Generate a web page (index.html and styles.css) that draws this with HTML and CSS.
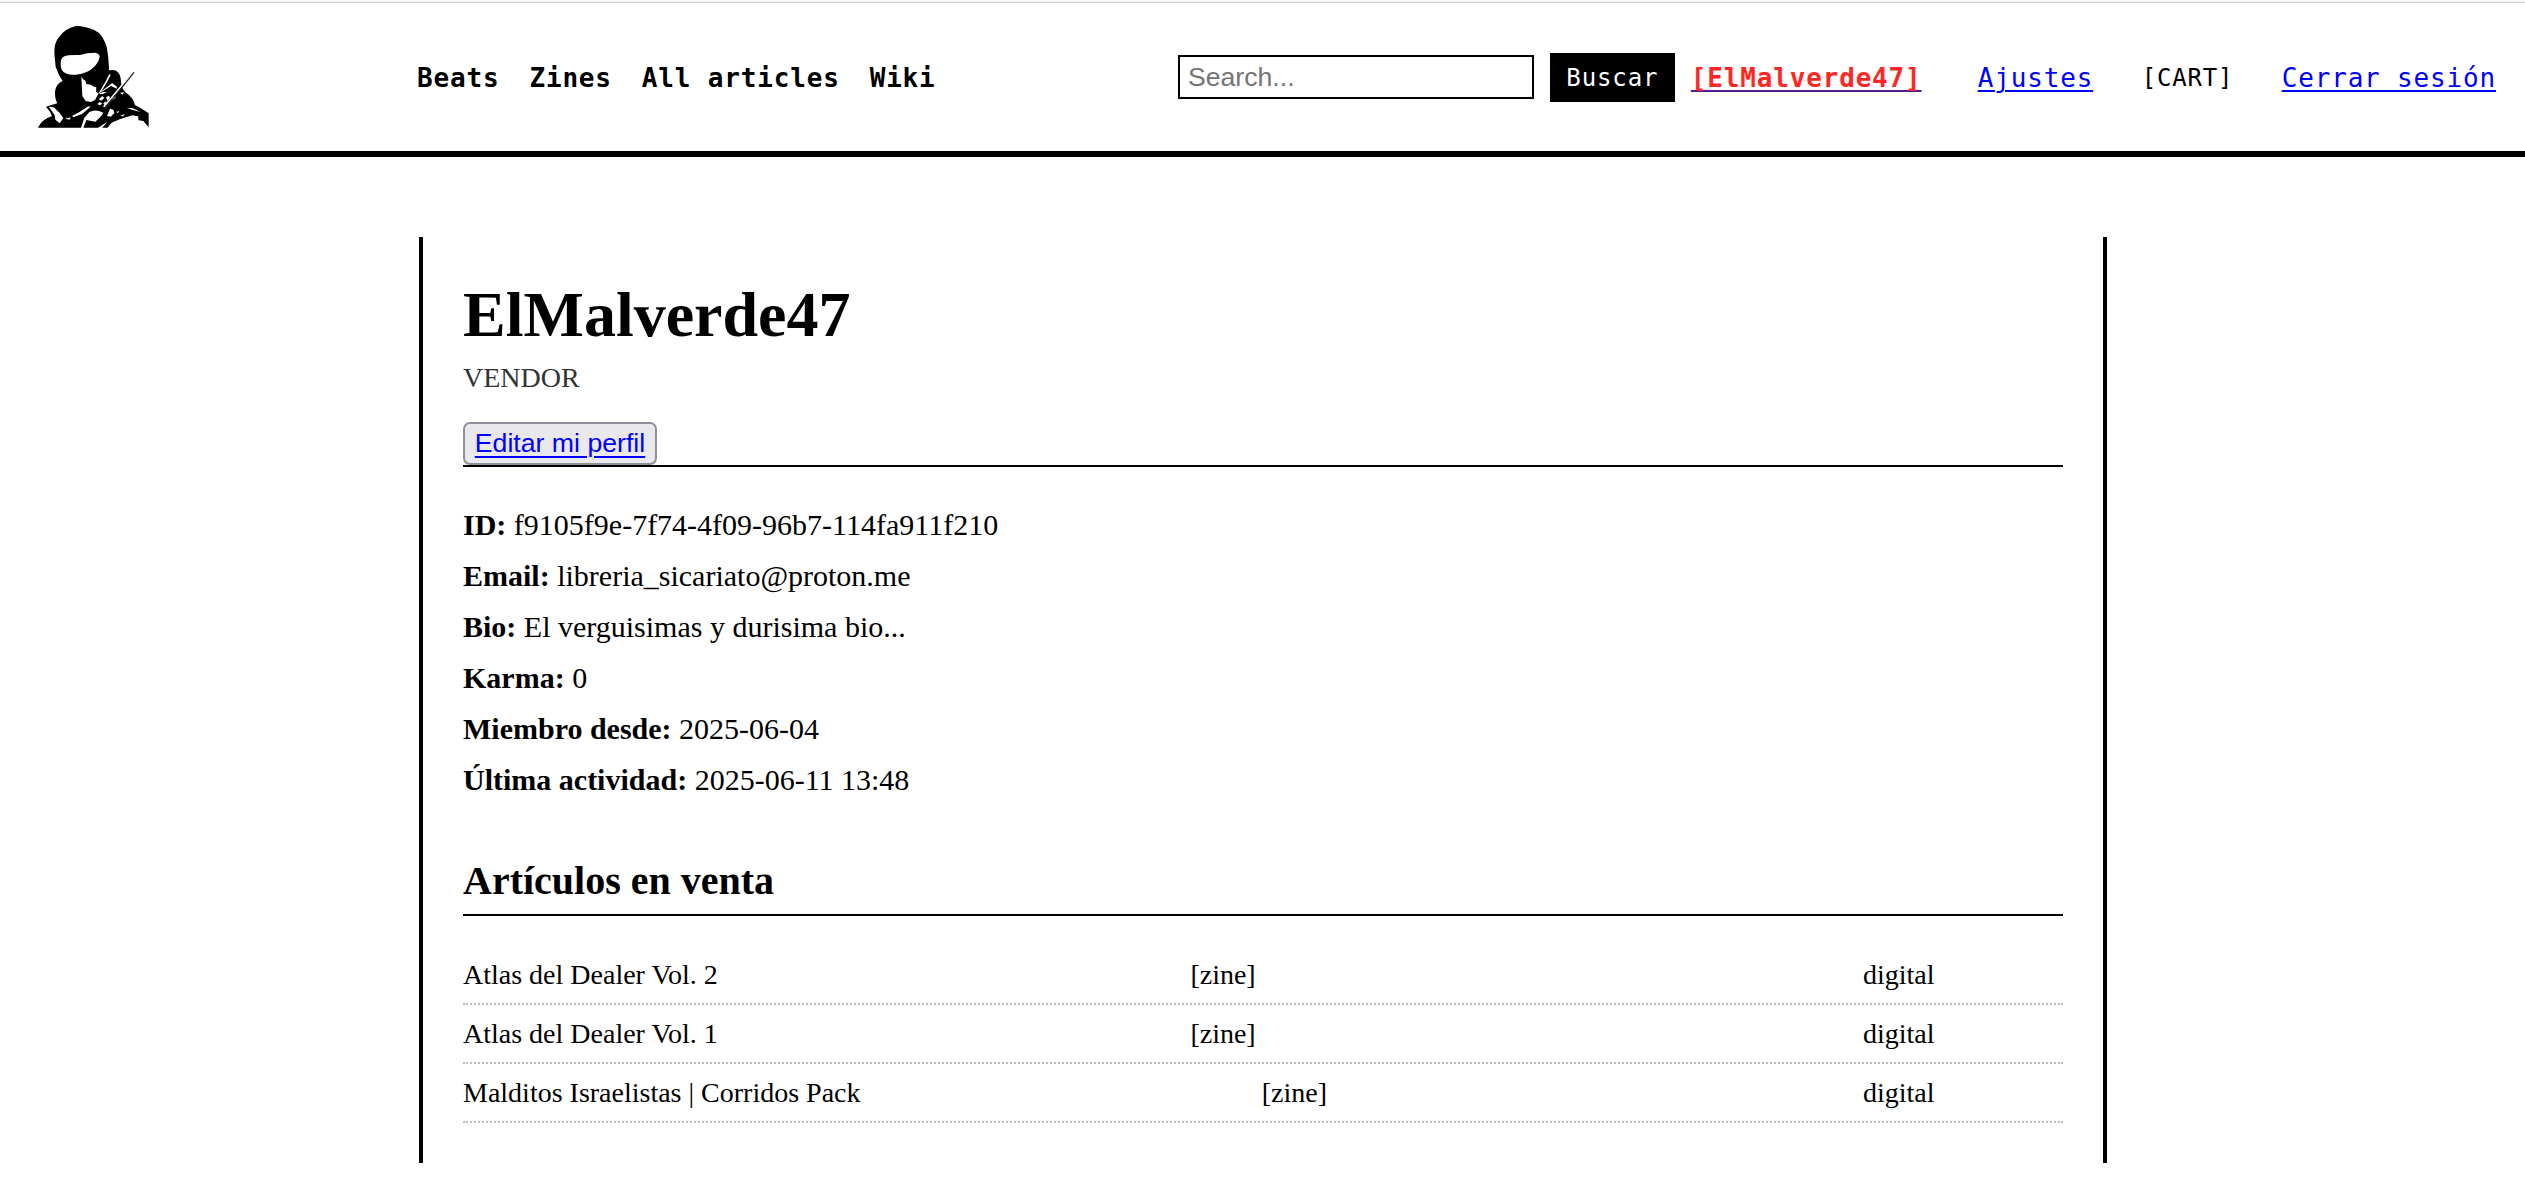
FILE: index.html
```html
<!DOCTYPE html>
<html lang="es">
<head>
<meta charset="utf-8">
<title>ElMalverde47</title>
<link rel="stylesheet" href="styles.css">
</head>
<body>
<header class="site-header">
  <a class="logo" href="#" aria-label="Inicio">
    <svg viewBox="0 0 450 450" width="150" height="150">
      <path d="M170 47Q135 55 118 80Q102 97 103 130L107 170Q115 195 128 213Q107 222 105 245Q104 265 112 280L92 286L78 290Q92 305 96 318Q66 328 54 353H386V310Q365 295 345 285Q340 262 318 248Q303 238 302 205Q298 182 280 180L267 181Q267 150 260 110Q250 80 236 68Q215 51 170 47Z"/>
      <g fill="#fff">
        <path d="M122 158Q122 139 145 136Q165 134 180 135Q200 128 226 128Q239 131 239 141Q236 157 222 171Q204 190 168 194Q136 197 125 179Q121 169 122 158ZM184 199L189 208L196 212L199 222L213 224L221 230L229 232L228 246L236 250L225 270L213 276L197 273L187 258Z"/>
        <path d="M86 290L101 292L119 309L130 324L119 340L106 329L104 316L96 304ZM268 192L272 195L258 222L240 250L237 248L256 216ZM270 224L276 219L291 230L290 236L273 228L243 247L245 243ZM208 306Q225 296 250 308L242 320L226 335L199 330L190 354H183L193 323ZM261 318L270 296L280 299L283 310L272 320ZM262 354L275 338L299 328L337 316L354 319L356 331L370 333L386 352V354ZM234 354L248 344L262 336L246 354ZM320 293L339 295L362 306L338 300ZM137 321L143 325L152 322L149 329L140 327ZM157 317L177 307L205 289L212 290L186 312L159 322Z"/>
        <path d="M237 268L247 258L253 265L243 272ZM258 262L267 257L270 264L262 272ZM232 282L240 276L247 281L239 286ZM250 280L258 274L260 282L253 286ZM274 266L284 257L287 262L279 270ZM236 252L249 246L262 247L248 252ZM300 248L312 247L308 254ZM288 306L298 303L294 309ZM300 318L314 312L310 319Z"/>
      </g>
      <path d="M251 291L326 202" stroke="#fff" stroke-width="5"/>
      <path d="M255 296L342 187" stroke="#222" stroke-width="4"/>
    </svg>
  </a>
  <nav class="main-nav">
    <a href="#">Beats</a><a href="#">Zines</a><a href="#">All articles</a><a href="#">Wiki</a>
  </nav>
  <form class="search">
    <input class="search-input" type="text" placeholder="Search...">
    <button class="search-button" type="button">Buscar</button>
  </form>
  <a class="user-link" href="#">[ElMalverde47]</a>
  <a class="settings-link" href="#">Ajustes</a>
  <span class="cart">[CART]</span>
  <a class="logout-link" href="#">Cerrar sesión</a>
</header>
<main class="profile">
  <div class="profile-head">
    <h1 class="name">ElMalverde47</h1>
    <p class="role">VENDOR</p>
    <button class="edit" type="button"><a href="#">Editar mi perfil</a></button>
  </div>
  <section class="info">
    <p><strong>ID:</strong> f9105f9e-7f74-4f09-96b7-114fa911f210</p>
    <p><strong>Email:</strong> libreria_sicariato@proton.me</p>
    <p><strong>Bio:</strong> El verguisimas y durisima bio...</p>
    <p><strong>Karma:</strong> 0</p>
    <p><strong>Miembro desde:</strong> 2025-06-04</p>
    <p><strong>Última actividad:</strong> 2025-06-11 13:48</p>
  </section>
  <h2 class="section-title">Artículos en venta</h2>
  <ul class="articles">
    <li><span>Atlas del Dealer Vol. 2</span><span class="col">[zine]</span><span class="col">digital</span></li>
    <li><span>Atlas del Dealer Vol. 1</span><span class="col">[zine]</span><span class="col">digital</span></li>
    <li><span>Malditos Israelistas | Corridos Pack</span><span class="col">[zine]</span><span class="col">digital</span></li>
  </ul>
</main>
</body>
</html>
```
FILE: styles.css
```css
* { box-sizing: border-box; }
body {
  margin: 0;
  background: #fff;
  color: #000;
  font-family: "Liberation Serif", serif;
  font-size: 30px;
  line-height: 51px;
}
p, h1, h2, ul { margin: 0; padding: 0; }

.site-header {
  display: flex;
  align-items: center;
  height: 157px;
  padding: 3px 29px 0 0;
  background: linear-gradient(#f9f9fb 2px, #ccc 2px, #ccc 3px, #fff 3px);
  border-bottom: 6px solid #000;
  font-family: "DejaVu Sans Mono", monospace;
  font-size: 26px;
  letter-spacing: 0.83px;
  line-height: 40px;
  white-space: nowrap;
}
.logo { width: 150px; height: 150px; margin: 0 247px 0 20px; flex: none; padding-top: 8px; }
.logo svg { display: block; }
.main-nav { display: flex; gap: 30px; font-weight: bold; width: 761px; padding-top: 2px; }
.main-nav a { color: #000; text-decoration: none; }
.search { display: flex; align-items: center; gap: 16px; width: 513px; }
.search-input {
  width: 356px;
  height: 44px;
  padding: 0 8px;
  border: 2px solid #000;
  font: 26.67px "Liberation Sans", sans-serif;
}
.search-input::placeholder { color: #757575; }
.search-button {
  width: 125px;
  height: 49px;
  padding: 2px 0 0;
  border: 0;
  background: #000;
  color: #fff;
  font: 24px "DejaVu Sans Mono", monospace;
  letter-spacing: 0.9px;
}
.site-header > a { text-decoration-thickness: 2px; text-underline-offset: 3px; color: #00f; }
.site-header > .user-link { color: #ff2626; font-weight: bold; text-decoration-color: #551a8b; width: 287px; }
.site-header > .user-link, .settings-link, .cart, .logout-link { padding-top: 2px; }
.settings-link { width: 164px; }
.cart { font-size: 24px; letter-spacing: 0.8px; width: 140px; }

.profile {
  width: 1688px;
  height: 926px;
  margin: 80px 0 0 419px;
  padding: 40px;
  border: solid #000;
  border-width: 0 4px;
}
.profile-head { height: 190px; border-bottom: 2px solid #000; }
.name { font-size: 64px; line-height: 75px; }
.role { font-size: 28px; line-height: 52px; color: #333; }
.edit {
  display: block;
  width: 194px;
  height: 43px;
  margin-top: 18px;
  padding: 0;
  border: 2px solid #8f8f9d;
  border-radius: 7px;
  background: #e9e9ed;
  font: 26.67px "Liberation Sans", sans-serif;
}
.edit a { color: #00f; text-decoration-thickness: 2px; text-underline-offset: 4px; }
.info { padding: 32px 0 34px; }
.section-title { margin-top: 8px; height: 69px; font-size: 40px; line-height: 68px; border-bottom: 2px solid #000; }
.articles { margin-top: 30px; list-style: none; font-size: 28px; line-height: 57px; }
.articles li {
  display: flex;
  justify-content: space-between;
  height: 59px;
  border-bottom: 2px dotted #bbb;
}
.articles .col { width: 200px; }
```
